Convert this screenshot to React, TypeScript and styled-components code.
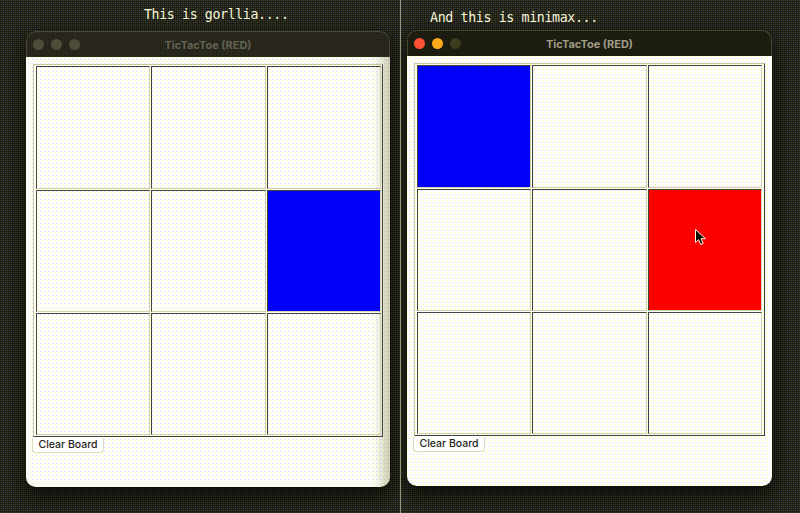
import React from "react";
import styled, { createGlobalStyle, css } from "styled-components";

const Global = createGlobalStyle`
  * { box-sizing: border-box; }
  body { margin: 0; background: #242420; overflow: hidden; }
`;

const paper = css`
  background-color: #fffffe;
  background-image: radial-gradient(circle at 0.5px 0.5px, #ffff88 0.6px, transparent 0.7px),
    radial-gradient(circle at 2.5px 2.5px, #d4d4ff 0.6px, transparent 0.7px);
  background-size: 4px 4px;
`;

const Desktop = styled.main`
  width: 800px;
  height: 513px;
  display: grid;
  grid-template-columns: 400px 1px 399px;
  background-color: #25251c;
  background-image: conic-gradient(#34344a 25%, #2b2b0d 0 50%, #151510 0 75%, #2b2b0d 0);
  background-size: 2px 2px;
`;

const Divider = styled.div`
  background: #94947c;
`;

const Pane = styled.section<{ $active?: boolean }>`
  min-width: 0;
  overflow: hidden;
  padding-left: ${(p) => (p.$active ? 6 : 26)}px;
`;

const Caption = styled.div<{ $active?: boolean }>`
  height: ${(p) => (p.$active ? 30 : 31)}px;
  padding: ${(p) => (p.$active ? "9px 0 0 23px" : "6px 0 0 118px")};
  font: 13.3px/18px "DejaVu Sans Mono", monospace;
  letter-spacing: ${(p) => (p.$active ? "-0.38px" : "-0.4px")};
  color: #f6f6d8;
  white-space: pre;
`;

const CaptionText = styled.span`
  display: inline-block;
  transform: scaleY(1.04);
`;

const Window = styled.div<{ $active?: boolean }>`
  width: ${(p) => (p.$active ? 365 : 364)}px;
  height: 456px;
  border-radius: 10px;
  overflow: hidden;
  box-shadow: 0 8px 20px 3px rgba(0, 0, 0, 0.65);
`;

const TitleBar = styled.header<{ $active?: boolean }>`
  height: 26px;
  display: grid;
  grid-template-columns: 80px 1fr 80px;
  align-items: center;
  border: 1px solid #484834;
  border-bottom: 0;
  border-radius: 10px 10px 0 0;
  background: ${(p) => (p.$active ? "rgba(24,24,12,.7)" : "rgba(38,38,28,.55)")};
`;

const Lights = styled.div`
  display: flex;
  gap: 7px;
  padding-left: 6px;
`;

const Light = styled.i<{ $color: string }>`
  width: 11px;
  height: 11px;
  border-radius: 50%;
  background: ${(p) => p.$color};
`;

const Title = styled.h1<{ $active?: boolean }>`
  margin: 0;
  text-align: center;
  font: 700 11px/24px Inter, sans-serif;
  color: ${(p) => (p.$active ? "#a09c88" : "#626252")};
  white-space: nowrap;
`;

const Content = styled.div<{ $active?: boolean }>`
  height: 430px;
  padding: 7px 0 0 7px;
  ${paper}
  ${(p) =>
    !p.$active &&
    css`
      box-shadow: inset -16px 0 13px -9px rgba(140, 140, 90, 0.5);
    `}
`;

const Board = styled.div<{ $active?: boolean }>`
  width: ${(p) => (p.$active ? 351 : 350)}px;
  height: 373px;
  display: grid;
  grid-template-columns: 114px 115px 114px;
  grid-template-rows: 123px 122px 122px;
  gap: 1px;
  padding: 1px 0 0 2px;
  border: 1px solid;
  border-color: #c8c8a8 #44443a #44443a #c8c8a8;
`;

const Cell = styled.div<{ $fill?: string }>`
  border: 1px solid;
  border-color: #44443c #d2d2ac #d2d2ac #44443c;
  ${(p) =>
    p.$fill &&
    css`
      background-color: ${p.$fill};
      background-image: radial-gradient(circle at 0.5px 0.5px, rgba(0, 0, 0, 0.2) 0.6px, transparent 0.7px);
      background-size: 4px 4px;
    `}
`;

const ClearButton = styled.button`
  display: block;
  width: 72px;
  height: 16px;
  margin-left: -1px;
  padding: 0;
  border: 1px solid #dcdcc4;
  border-top-color: transparent;
  border-radius: 4px;
  background: #fffffe;
  color: #24241c;
  font: 500 10.5px/14px Inter, sans-serif;
  white-space: nowrap;
`;

const Pointer = styled.svg`
  position: absolute;
  left: 694px;
  top: 228px;
`;

type GameProps = { caption: string; active?: boolean; fills: Record<number, string> };

function Game({ caption, active, fills }: GameProps) {
  const lights = active ? ["#ff5234", "#ffac1c", "#3c3c1e"] : ["#4c4c38", "#4c4c38", "#4c4c38"];
  return (
    <Pane $active={active}>
      <Caption $active={active}><CaptionText>{caption}</CaptionText></Caption>
      <Window $active={active}>
        <TitleBar $active={active}>
          <Lights>{lights.map((c, i) => <Light key={i} $color={c} />)}</Lights>
          <Title $active={active}>TicTacToe (RED)</Title>
        </TitleBar>
        <Content $active={active}>
          <Board $active={active}>
            {Array.from({ length: 9 }, (_, i) => <Cell key={i} $fill={fills[i]} />)}
          </Board>
          <ClearButton>Clear Board</ClearButton>
        </Content>
      </Window>
    </Pane>
  );
}

export default function App() {
  return (
    <>
      <Global />
      <Desktop>
        <Game caption="This is gorllia...." fills={{ 5: "#0000fc" }} />
        <Divider />
        <Game active caption="And this is minimax..." fills={{ 0: "#0000fc", 5: "#ff0000" }} />
      </Desktop>
      <Pointer width="13" height="19" viewBox="0 0 13 19">
        <path d="M1.5 1.5V14.5L4.6 11.6L6.7 16.5L9.2 15.4L7.1 10.7H11.5Z" fill="#080800" stroke="#fff4dc" strokeWidth="1" />
      </Pointer>
    </>
  );
}
